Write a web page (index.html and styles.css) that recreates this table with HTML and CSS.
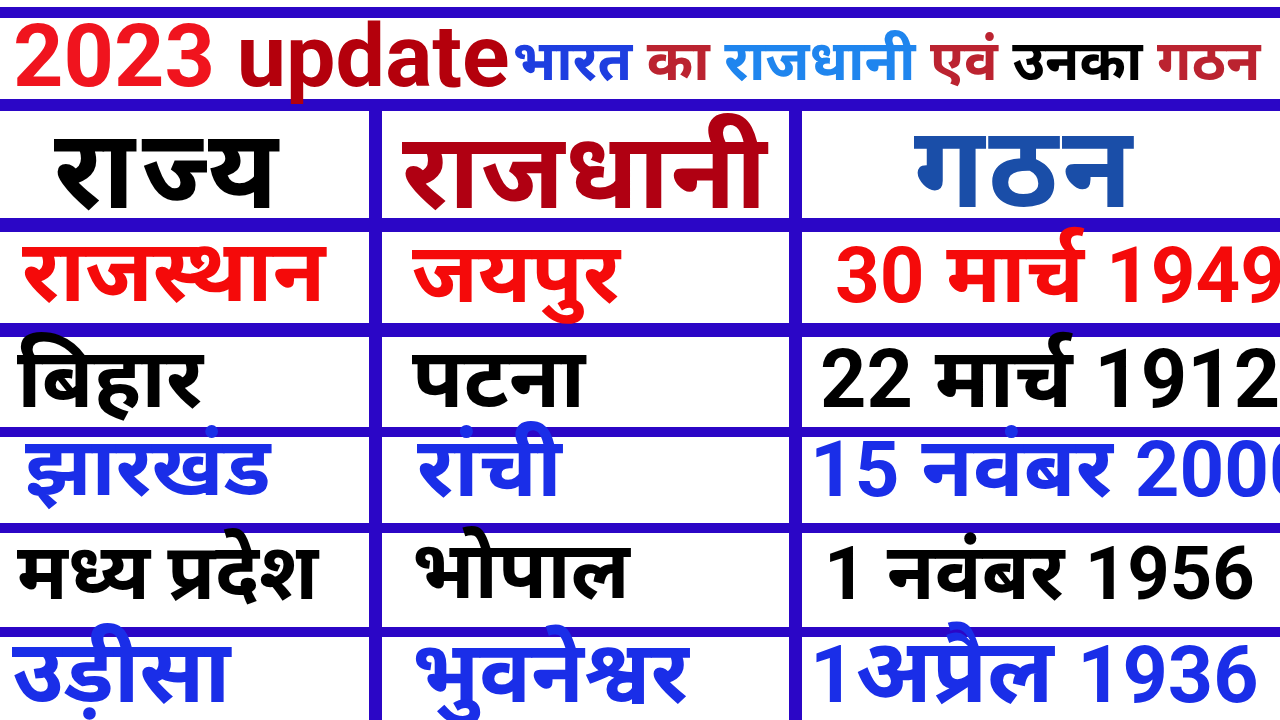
FILE: index.html
```html
<!DOCTYPE html>
<html lang="hi">
<head>
<meta charset="utf-8">
<title>2023 update भारत का राजधानी एवं उनका गठन</title>
<link rel="stylesheet" href="styles.css">
</head>
<body>
<div class="sheet">
  <div class="row title-row">
    <div class="cell title-cell">
      <span class="txt"><span class="t-year">2023 </span><span class="t-upd">update</span><span class="t-hi"><span class="c-blue">भारत</span> <span class="c-dred">का</span> <span class="c-sky">राजधानी</span> <span class="c-dred">एवं</span> <span class="c-black">उनका</span> <span class="c-dred">गठन</span></span></span>
    </div>
  </div>
  <div class="row head-row gap-12">
    <div class="cell h1"><span class="txt">राज्य</span></div>
    <div class="cell h2"><span class="txt">राजधानी</span></div>
    <div class="cell h3"><span class="txt">गठन</span></div>
  </div>
  <div class="row data red r1 gap-14">
    <div class="cell c1 pl-22 fs-86"><span class="txt">राजस्थान</span></div>
    <div class="cell c2 pl-30"><span class="txt">जयपुर</span></div>
    <div class="cell c3 pl-33 d-78"><span class="txt"><span class="d">30</span> मार्च <span class="d">1949</span></span></div>
  </div>
  <div class="row data black r2 gap-14">
    <div class="cell c1 pl-17"><span class="txt">बिहार</span></div>
    <div class="cell c2 pl-30"><span class="txt">पटना</span></div>
    <div class="cell c3 pl-18 d-80"><span class="txt"><span class="d">22</span> मार्च <span class="d">1912</span></span></div>
  </div>
  <div class="row data blue r3 gap-10">
    <div class="cell c1 pl-25 fs-82"><span class="txt">झारखंड</span></div>
    <div class="cell c2 pl-35"><span class="txt">रांची</span></div>
    <div class="cell c3 pl-8 d-78"><span class="txt"><span class="d">15</span> नवंबर <span class="d">2000</span></span></div>
  </div>
  <div class="row data black r4 gap-10">
    <div class="cell c1 pl-17 narrow"><span class="txt">मध्य प्रदेश</span></div>
    <div class="cell c2 pl-30 fs-80"><span class="txt">भोपाल</span></div>
    <div class="cell c3 pl-22 fs-78"><span class="txt"><span class="d">1</span> नवंबर <span class="d">1956</span></span></div>
  </div>
  <div class="row data blue r5 gap-10 last">
    <div class="cell c1 pl-12 fs-88"><span class="txt">उड़ीसा</span></div>
    <div class="cell c2 pl-30 fs-86"><span class="txt">भुवनेश्वर</span></div>
    <div class="cell c3 pl-8 fs-90"><span class="txt"><span class="d">1</span>अप्रैल <span class="d">1936</span></span></div>
  </div>
</div>
</body>
</html>
```
FILE: styles.css
```css
html, body {
  margin: 0;
  padding: 0;
  background: #ffffff;
}
body {
  width: 1280px;
  height: 720px;
  overflow: hidden;
  font-family: "Noto Sans Devanagari", "Noto Sans", "Lohit Devanagari", sans-serif;
  font-weight: 700;
}
.sheet {
  margin-top: 7px;
  background: #2b06c6;
  padding-top: 11px;
  height: 713px;
  box-sizing: border-box;
  display: flex;
  flex-direction: column;
}
.row {
  display: grid;
  grid-template-columns: 369px 407px minmax(0, 1fr);
  grid-template-rows: minmax(0, 1fr);
  column-gap: 13px;
  flex: none;
  min-height: 0;
}
.gap-12 { margin-top: 12px; }
.gap-14 { margin-top: 14px; }
.gap-10 { margin-top: 10px; }
.cell {
  background: #ffffff;
  white-space: nowrap;
  display: flex;
  align-items: flex-end;
  min-width: 0;
  min-height: 0;
  box-sizing: border-box;
}
.txt {
  display: block;
  line-height: 1;
  flex: none;
}
.title-row { height: 81px; grid-template-columns: minmax(0, 1fr); }
.head-row { height: 107px; }
.r1 { height: 91px; }
.r2 { height: 90px; }
.r3 { height: 86px; }
.r4 { height: 94px; }
.last { flex: 1 1 auto; }

.title-cell { padding-left: 13px; }
.title-cell .txt { margin-bottom: -2px; }
.t-year, .t-upd {
  font-family: Roboto, "Liberation Sans", sans-serif;
  font-weight: 700;
  font-size: 88px;
}
.t-year { color: #f0141e; }
.t-upd { color: #b4000c; }
.t-hi { font-size: 56px; margin-left: 3px; position: relative; top: -6px; }
.c-blue { color: #1e3ee0; }
.c-dred { color: #bb2330; }
.c-sky { color: #1f85ee; }
.c-black { color: #000; }

.head-row .txt { line-height: 0.8; margin-bottom: -7px; }
.h1 { color: #000; padding-left: 54px; font-size: 110px; letter-spacing: 7px; }
.h2 { color: #b00012; padding-left: 20px; font-size: 106px; letter-spacing: 1px; }
.h3 { color: #1a4ea8; padding-left: 112px; font-size: 114px; letter-spacing: 4px; }

.data .cell { font-size: 84px; }
.data .txt { line-height: 0.8; margin-bottom: -2px; }
.data .cell.narrow { font-size: 78px; word-spacing: -3px; }
.data .cell.fs-78 { font-size: 78px; }
.data .cell.fs-80 { font-size: 80px; }
.data .cell.fs-82 { font-size: 82px; }
.data .cell.fs-86 { font-size: 86px; }
.data .cell.fs-88 { font-size: 88px; }
.data .cell.fs-90 { font-size: 90px; }
.r1 .cell { padding-bottom: 10px; }
.r2 .cell { padding-bottom: 9px; }
.r3 .cell { padding-bottom: 16px; }
.r4 .cell { padding-bottom: 18px; }
.r5 .cell { padding-bottom: 6px; }

.pl-8 { padding-left: 8px; }
.pl-12 { padding-left: 12px; }
.pl-17 { padding-left: 17px; }
.pl-18 { padding-left: 18px; }
.pl-22 { padding-left: 22px; }
.pl-25 { padding-left: 25px; }
.pl-30 { padding-left: 30px; }
.pl-33 { padding-left: 33px; }
.pl-35 { padding-left: 35px; }

.d {
  font-family: Roboto, "Liberation Sans", sans-serif;
  font-weight: 700;
  font-size: 74px;
}
.d-78 .d { font-size: 78px; }
.d-80 .d { font-size: 81px; }
.fs-90 .d { font-size: 79px; }
.red .cell { color: #f50a0a; }
.black .cell { color: #000; }
.blue .cell { color: #1a2ee8; }
```
